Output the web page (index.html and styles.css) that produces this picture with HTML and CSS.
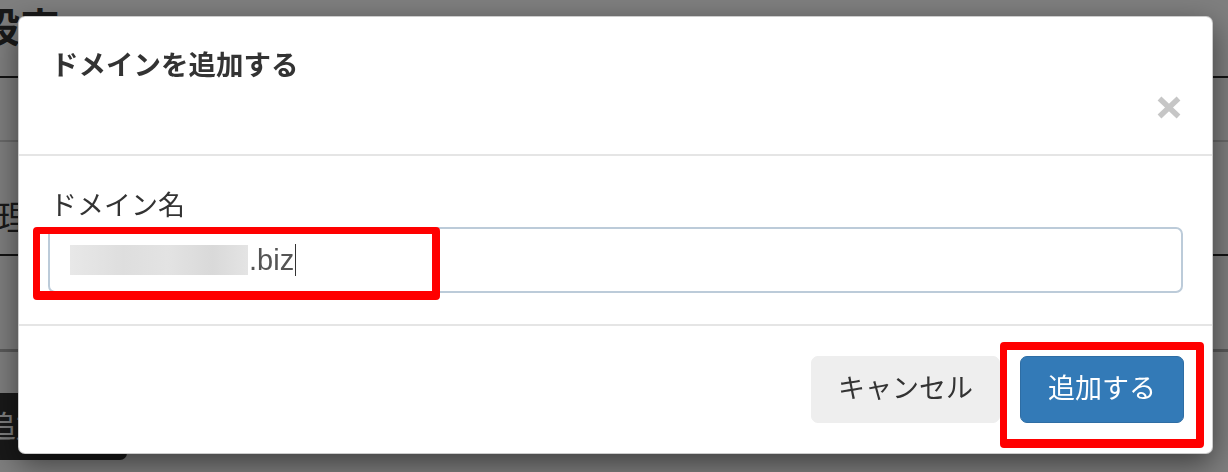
FILE: index.html
```html
<!DOCTYPE html>
<html lang="ja">
<head>
<meta charset="utf-8">
<title>ドメインを追加する</title>
<link rel="stylesheet" href="styles.css">
</head>
<body>
<div class="page">
  <h1 class="page-title">設定</h1>
  <div class="row row-a"></div>
  <div class="row row-b">管理</div>
  <div class="row row-c"></div>
  <div class="page-actions"><span class="btn-dark">追加</span></div>
</div>
<div class="backdrop"></div>
<div class="modal">
  <div class="modal-header">
    <h4 class="modal-title">ドメインを追加する</h4>
    <button class="close" type="button" aria-label="閉じる">
      <svg width="24" height="23" viewBox="0 0 24 23"><path d="M2.5 2.5 L21.5 20.5 M21.5 2.5 L2.5 20.5" stroke="#c6c6c6" stroke-width="5.5" fill="none"/></svg>
    </button>
  </div>
  <div class="modal-body">
    <label class="control-label">ドメイン名</label>
    <div class="form-control"><span class="masked"></span><span class="typed">.biz</span><span class="caret"></span></div>
  </div>
  <div class="modal-footer">
    <button class="btn btn-default" type="button">キャンセル</button>
    <button class="btn btn-primary" type="button">追加する</button>
  </div>
</div>
<div class="highlight hl-input"></div>
<div class="highlight hl-submit"></div>
</body>
</html>
```
FILE: styles.css
```css
html, body {
  margin: 0;
  padding: 0;
}
body {
  width: 1228px;
  height: 472px;
  overflow: hidden;
  position: relative;
  background: #fff;
  color: #333;
  font-family: "Liberation Sans", "Noto Sans CJK JP", sans-serif;
}

/* page behind the backdrop */
.page-title {
  margin: 0 0 0 -20px;
  height: 56px;
  padding-bottom: 20px;
  font-size: 40px;
  line-height: 56px;
  font-weight: 700;
  color: #333;
  border-bottom: 2px solid #262626;
}
.row {
  box-sizing: border-box;
}
.row-a {
  height: 64px;
  border-bottom: 2px solid #d2d2d2;
}
.row-b {
  height: 114px;
  padding-top: 56px;
  margin-left: -37px;
  font-size: 34px;
  line-height: 40px;
  color: #333;
  border-bottom: 2px solid #262626;
}
.row-c {
  height: 96px;
  border-bottom: 3px solid #b4b4b4;
}
.page-actions {
  padding-top: 41px;
}
.btn-dark {
  display: inline-block;
  box-sizing: border-box;
  margin-left: -40px;
  width: 167px;
  height: 67px;
  padding-left: 26px;
  line-height: 67px;
  font-size: 30px;
  color: #fff;
  background: #333;
  border-radius: 7px;
}

.backdrop {
  position: fixed;
  inset: 0;
  background: rgba(0, 0, 0, 0.5);
}

/* modal */
.modal {
  position: absolute;
  left: 18px;
  top: 16px;
  width: 1195px;
  box-sizing: border-box;
  background: #fff;
  border: 1px solid rgba(0, 0, 0, 0.2);
  border-radius: 7px;
  box-shadow: 0 10px 30px rgba(0, 0, 0, 0.5);
}
.modal-header {
  display: flex;
  flex-direction: column;
  padding: 29px 31px 26px 32px;
  border-bottom: 2px solid #e5e5e5;
}
.modal-title {
  margin: 0;
  font-size: 27.5px;
  line-height: 40px;
  font-weight: 700;
  color: #333;
}
.close {
  align-self: flex-end;
  display: flex;
  align-items: center;
  height: 42px;
  padding: 0;
  border: 0;
  background: none;
}
.modal-body {
  padding: 29px 29px 31px;
}
.control-label {
  display: block;
  padding-left: 2px;
  font-size: 27px;
  line-height: 42px;
  color: #333;
}
.form-control {
  display: flex;
  align-items: center;
  box-sizing: border-box;
  height: 66px;
  padding: 0 20px;
  border: 2px solid #bccbd9;
  border-radius: 7px;
  font-size: 29px;
  color: #555;
}
.masked {
  width: 178px;
  height: 30px;
  margin-right: 1px;
  background: linear-gradient(90deg, #e8e8e8 0%, #dedede 30%, #e3e3e3 55%, #d9d9d9 80%, #e4e4e4 100%);
}
.caret {
  width: 1px;
  height: 32px;
  margin-left: 1px;
  background: #333;
}
.modal-footer {
  display: flex;
  justify-content: flex-end;
  gap: 20px;
  padding: 30px 28px 30px;
  border-top: 2px solid #e5e5e5;
}
.btn {
  height: 67px;
  padding: 0 26px;
  font-family: inherit;
  font-size: 27px;
  line-height: 65px;
  border: 1px solid transparent;
  border-radius: 7px;
}
.btn-default {
  background: #eee;
  border-color: #eee;
  color: #333;
}
.btn-primary {
  padding: 0 27px;
  background: #337ab7;
  border-color: #2e6da4;
  color: #fff;
}

/* annotation boxes */
.highlight {
  position: absolute;
  box-sizing: border-box;
  border-style: solid;
  border-color: #ff0000;
  border-radius: 4px;
}
.hl-input {
  left: 33px;
  top: 227px;
  width: 407px;
  height: 73px;
  border-width: 7px 8px 9px 7px;
}
.hl-submit {
  left: 1000px;
  top: 342px;
  width: 204px;
  height: 106px;
  border-width: 8px 8px 9px 7px;
}
```
